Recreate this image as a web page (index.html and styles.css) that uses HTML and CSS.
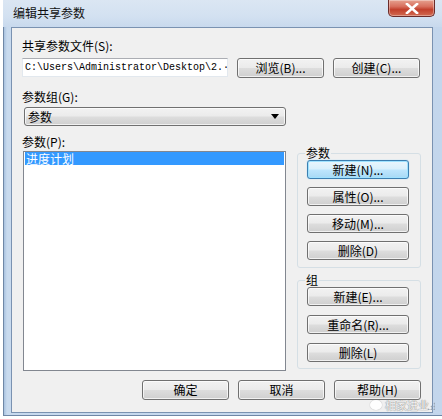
FILE: index.html
```html
<!DOCTYPE html>
<html>
<head>
<meta charset="utf-8">
<link rel="stylesheet" href="styles.css">
</head>
<body>
<div class="window">
  <div class="titlebar">
    <span class="title">编辑共享参数</span>
    <span class="close"><svg width="14" height="11" viewBox="0 0 14 11"><path d="M2 1 L12 10 M12 1 L2 10" stroke="#fff" stroke-width="2.6" stroke-linecap="square"/></svg></span>
  </div>
  <div class="client">
    <div class="lbl">共享参数文件(S):</div>
    <div class="filerow">
      <div class="textbox">C:\Users\Administrator\Desktop\2.·</div>
      <div class="btn">浏览(B)...</div>
      <div class="btn">创建(C)...</div>
    </div>
    <div class="lbl lbl2">参数组(G):</div>
    <div class="combo"><span>参数</span><svg width="8" height="5" viewBox="0 0 8 5"><path d="M0 0 H8 L4 5 Z" fill="#000"/></svg></div>
    <div class="main">
      <div class="leftcol">
        <div class="lbl">参数(P):</div>
        <div class="list"><div class="item sel">进度计划</div></div>
      </div>
      <div class="rightcol">
        <fieldset class="grp grp1">
          <legend>参数</legend>
          <div class="btn gbtn focus">新建(N)...</div>
          <div class="btn gbtn">属性(O)...</div>
          <div class="btn gbtn">移动(M)...</div>
          <div class="btn gbtn">删除(D)</div>
        </fieldset>
        <fieldset class="grp grp2">
          <legend>组</legend>
          <div class="btn gbtn">新建(E)...</div>
          <div class="btn gbtn">重命名(R)...</div>
          <div class="btn gbtn">删除(L)</div>
        </fieldset>
      </div>
    </div>
    <div class="bottom">
      <div class="btn">确定</div>
      <div class="btn">取消</div>
      <div class="btn">帮助(H)</div>
    </div>
  </div>
  <div class="watermark"><span class="wmicon"></span>相家进业</div>
  <div class="grip"></div>
</div>
</body>
</html>
```
FILE: styles.css
```css
* { box-sizing: border-box; }
body {
  margin: 0;
  background: #ffffff;
  font-family: "Noto Sans CJK SC", "Liberation Sans", sans-serif;
  font-size: 12px;
  color: #000;
}
.window {
  position: relative;
  width: 442px;
  height: 416px;
  margin-left: 3px;
  background: linear-gradient(90deg, #a9c2df 0px, #c8daee 3px, #c3d6ec 100%);
  border-left: 1px solid #6f87a6;
  border-bottom: 1px solid #6f87a6;
  padding-left: 7px;
  padding-right: 9px;
}
.titlebar {
  height: 27px;
  display: flex;
  justify-content: space-between;
  align-items: flex-start;
  margin-left: -8px;
  margin-right: -9px;
  padding-left: 10px;
  padding-right: 10px;
  background: linear-gradient(180deg, #dbe6f3 0%, #d3e1f1 60%, #c8d9ed 100%);
}
.title {
  margin-top: 5px;
  line-height: 16px;
  font-size: 12px;
  color: #111;
}
.close {
  width: 47px;
  height: 17px;
  border: 1px solid #6b2c2a;
  border-top: none;
  border-radius: 0 0 5px 5px;
  background: linear-gradient(180deg, #e6a18f 0%, #d8705e 40%, #c2402c 60%, #d16b52 100%);
  display: flex;
  align-items: center;
  justify-content: center;
  box-shadow: inset 0 0 0 1px rgba(255,255,255,0.35);
}
.client {
  width: 422px;
  height: 386px;
  background: #f0f0f0;
  border: 1px solid #7a92b1;
  display: flex;
  flex-direction: column;
  padding: 11px 11px 0 10px;
}
.lbl {
  height: 14px;
  line-height: 14px;
  white-space: nowrap;
}
.lbl2 { margin-top: 12px; }
.filerow {
  margin-top: 5px;
  display: flex;
  gap: 9px;
  height: 20px;
}
.textbox {
  width: 206px;
  height: 19px;
  background: #fff;
  border: 1px solid #e2e8ee;
  border-top-color: #abadb3;
  font-family: "Liberation Mono", monospace;
  font-size: 10px;
  line-height: 17px;
  padding-left: 2px;
  white-space: nowrap;
  overflow: hidden;
}
.btn {
  width: 87px;
  height: 20px;
  border: 1px solid #707070;
  border-radius: 3px;
  background: linear-gradient(180deg, #f2f2f2 0%, #ebebeb 48%, #dddddd 52%, #cfcfcf 100%);
  box-shadow: inset 0 0 0 1px rgba(255,255,255,0.7);
  display: flex;
  align-items: center;
  justify-content: center;
  line-height: 14px;
  white-space: nowrap;
}
.combo {
  margin-top: 3px;
  margin-left: 2px;
  width: 262px;
  height: 19px;
  border: 1px solid #707070;
  border-radius: 3px;
  background: linear-gradient(180deg, #f2f2f2 0%, #ebebeb 48%, #dddddd 52%, #cfcfcf 100%);
  box-shadow: inset 0 0 0 1px rgba(255,255,255,0.7);
  display: flex;
  align-items: center;
  justify-content: space-between;
  padding: 0 6px 0 3px;
  line-height: 14px;
}
.main {
  margin-top: 9px;
  display: flex;
  gap: 11px;
  height: 236px;
}
.leftcol {
  width: 264px;
  display: flex;
  flex-direction: column;
}
.list {
  margin-top: 2px;
  margin-left: 1px;
  width: 263px;
  height: 220px;
  background: #fff;
  border: 1px solid #828790;
  padding: 0 1px;
}
.item {
  height: 13px;
  line-height: 13px;
  padding-left: 1px;
  white-space: nowrap;
}
.item.sel {
  background: #3399ff;
  color: #fff;
}
.rightcol {
  width: 126px;
  display: flex;
  flex-direction: column;
  padding-top: 11px;
}
.grp {
  margin: 0;
  border: 1px solid #d5dfe5;
  border-radius: 3px;
  padding: 0 0 0 9px;
  display: flex;
  flex-direction: column;
  min-width: 0;
}
.grp legend {
  padding: 0 1px;
  margin-left: -2px;
  line-height: 14px;
  height: 14px;
}
.grp1 {
  height: 122px;
  gap: 8px;
  padding-top: 0;
}
.grp2 {
  margin-top: 5px;
  height: 96px;
  gap: 9px;
  padding-top: 0px;
}
.gbtn {
  width: 102px;
  height: 19px;
}
.gbtn.focus {
  border-color: #3c7fb1;
  background: linear-gradient(180deg, #eaf6fd 0%, #d9f0fc 48%, #bee6fd 52%, #a7d9f5 100%);
  box-shadow: inset 0 0 0 1px #9fe2ff, 0 0 1px #6fc8ff;
}
.bottom {
  margin-top: 9px;
  display: flex;
  justify-content: flex-end;
  gap: 9px;
}
.watermark {
  position: absolute;
  left: 366px;
  top: 399px;
  display: flex;
  align-items: center;
  gap: 3px;
  color: rgba(255,255,255,0.9);
  font-size: 11px;
  line-height: 12px;
  text-shadow: 0 0 1px #888, 0 0 1px #888;
}
.wmicon {
  width: 12px;
  height: 10px;
  border-radius: 50%;
  background: rgba(255,255,255,0.9);
  box-shadow: 0 0 1px #888;
}
.grip {
  position: absolute;
  right: 10px;
  bottom: 5px;
  width: 8px;
  height: 8px;
  background: radial-gradient(circle, #9aa6b4 0.8px, transparent 1.2px) 0 0 / 3px 3px;
  clip-path: polygon(100% 0, 100% 100%, 0 100%);
}
```
